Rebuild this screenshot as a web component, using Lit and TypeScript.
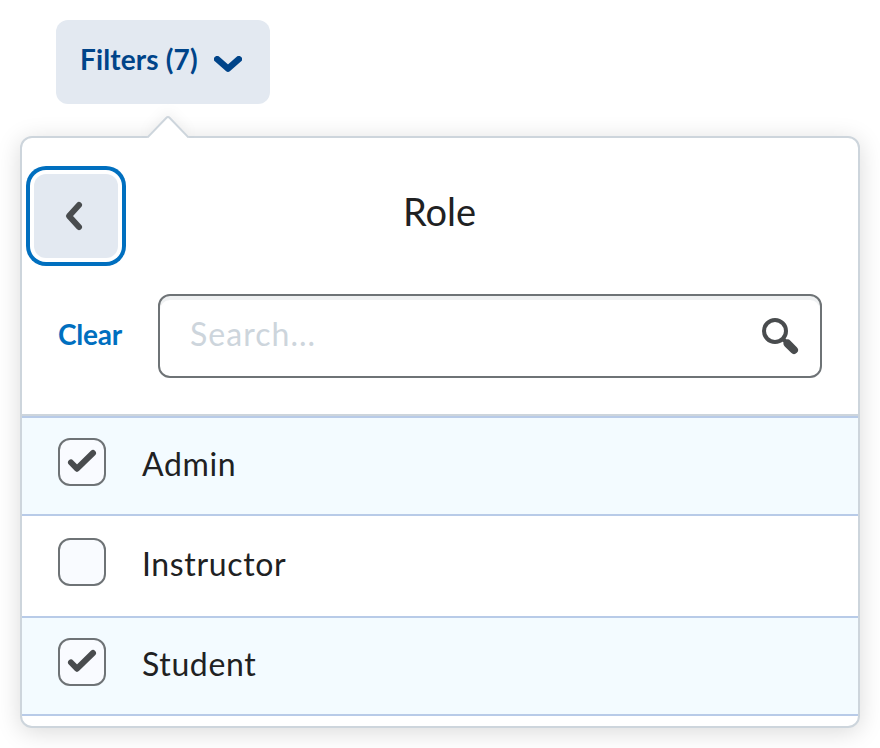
import { LitElement, html, css, svg, nothing } from "lit";
import { customElement, property, state } from "lit/decorators.js";
import { classMap } from "lit/directives/class-map.js";

interface Role {
  name: string;
  selected: boolean;
}

const checkIcon = svg`<path d="M13 24.5 L19 30.7 L35 15" fill="none" stroke="#494c4e" stroke-width="6" stroke-linecap="round" stroke-linejoin="round"/>`;

@customElement("role-item")
export class RoleItem extends LitElement {
  @property() label = "";
  @property({ type: Boolean, reflect: true }) selected = false;

  static styles = css`
    :host {
      display: block;
      color: #202122;
    }
    .row {
      box-sizing: border-box;
      display: flex;
      align-items: flex-start;
      gap: 36px;
      height: 100%;
      padding: var(--row-top, 22px) 36px 0;
    }
    .row.selected {
      background: #f3fbff;
    }
    .box {
      box-sizing: border-box;
      flex: none;
      width: 48px;
      height: 48px;
      border: 2px solid #6e7376;
      border-radius: 12px;
      background: #f9fbff;
    }
    .box svg {
      display: block;
      margin: -2px;
    }
    .label {
      font-size: 32px;
      line-height: 48px;
      letter-spacing: 0.64px;
      padding-top: 2px;
    }
  `;

  render() {
    return html`<div class=${classMap({ row: true, selected: this.selected })}>
      <div class="box" role="checkbox" aria-checked=${this.selected}>
        ${this.selected
          ? html`<svg width="48" height="48" viewBox="0 0 48 48">${checkIcon}</svg>`
          : nothing}
      </div>
      <div class="label">${this.label}</div>
    </div>`;
  }
}

@customElement("app-root")
export class AppRoot extends LitElement {
  @state() private roles: Role[] = [
    { name: "Admin", selected: true },
    { name: "Instructor", selected: false },
    { name: "Student", selected: true },
  ];

  static styles = css`
    :host {
      box-sizing: border-box;
      display: block;
      height: 748px;
      padding: 20px 20px 0;
      overflow: hidden;
      background: #fff;
      font-family: Lato, sans-serif;
      color: #202122;
    }
    button {
      font: inherit;
      border: 0;
      margin: 0;
    }
    .opener {
      box-sizing: border-box;
      display: flex;
      align-items: center;
      gap: 16px;
      width: 214px;
      height: 84px;
      margin-left: 36px;
      padding: 0 24px 6px;
      border-radius: 12px;
      background: #e3e9f1;
      color: #004489;
      font-size: 28px;
      font-weight: 700;
      line-height: 36px;
      letter-spacing: 0.13px;
      white-space: nowrap;
    }
    .opener span {
      width: 118px;
      text-align: left;
    }
    .opener svg {
      flex: none;
      margin-top: 12px;
    }
    .panel {
      position: relative;
      box-sizing: border-box;
      height: 592px;
      margin-top: 32px;
      border: 2px solid #cdd5dc;
      border-radius: 12px;
      background: #fff;
      box-shadow: 0 4px 24px rgba(0, 0, 0, 0.15);
    }
    .pointer {
      position: absolute;
      left: 106px;
      top: -34px;
      filter: drop-shadow(0 -4px 6px rgba(0, 0, 0, 0.05));
      clip-path: inset(0 0 0 0);
    }
    .title-bar {
      display: grid;
      grid-template-columns: 96px 1fr 96px;
      height: 156px;
    }
    .back {
      box-sizing: border-box;
      width: 84px;
      height: 84px;
      margin: 36px 0 0 12px;
      padding: 0;
      border-radius: 12px;
      background: #e3e9f1;
      box-shadow: 0 0 0 4px #fff, 0 0 0 8px #006fbf;
      outline: none;
    }
    .back svg {
      display: block;
    }
    .title {
      padding: 49px 1px 0 0;
      text-align: center;
      font-size: 38px;
      line-height: 48px;
    }
    .search-bar {
      box-sizing: border-box;
      display: flex;
      height: 122px;
      padding: 0 36px;
      border-bottom: 2px solid #cdd5dc;
    }
    .clear {
      width: 100px;
      padding: 0;
      background: none;
      color: #006fbf;
      font-size: 28px;
      font-weight: 700;
      line-height: 36px;
      letter-spacing: -0.2px;
      text-align: left;
      align-self: flex-start;
      margin-top: 22px;
    }
    .field {
      box-sizing: border-box;
      display: flex;
      justify-content: space-between;
      flex: 1;
      height: 84px;
      padding: 14px 18px 0 30px;
      border: 2px solid #6e7376;
      border-radius: 12px;
      box-shadow: inset 0 4px 0 rgba(177, 185, 190, 0.2);
      color: #cdd5dc;
      font-size: 32px;
      line-height: 48px;
      letter-spacing: 1.04px;
    }
    .list {
      display: grid;
      grid-template-rows: 98px 102px 98px;
      border-top: 2px solid #b8cbe8;
    }
    role-item {
      box-sizing: border-box;
      border-bottom: 2px solid #b8cbe8;
      --row-top: 20px;
    }
    role-item:nth-child(2) {
      --row-top: 22px;
    }
  `;

  render() {
    return html`
      <button class="opener">
        <span>Filters (7)</span>
        <svg width="28" height="18" viewBox="0 0 28 18">
          <path d="M3.2 3.2 L14 12.6 L24.8 3.2" fill="none" stroke="#004489" stroke-width="6.4" stroke-linecap="round" stroke-linejoin="round" />
        </svg>
      </button>
      <div class="panel">
        <svg class="pointer" width="80" height="34" viewBox="0 0 80 34">
          <path d="M18 35 L38.2 14 Q40 12.2 41.8 14 L62 35 Z" fill="#fff" />
          <path d="M19.3 33.6 L38.2 14 Q40 12.2 41.8 14 L60.7 33.6" fill="none" stroke="#cdd5dc" stroke-width="2" />
        </svg>
        <div class="title-bar">
          <button class="back" aria-label="Back">
            <svg width="84" height="84" viewBox="0 0 84 84">
              <path d="M45 31 L35 42 L45 53" fill="none" stroke="#494c4e" stroke-width="6" stroke-linecap="round" stroke-linejoin="round" />
            </svg>
          </button>
          <div class="title">Role</div>
        </div>
        <div class="search-bar">
          <button class="clear">Clear</button>
          <div class="field">
            <span>Search...</span>
            <svg width="44" height="52" viewBox="0 0 44 52">
              <circle cx="17" cy="21" r="11" fill="none" stroke="#494c4e" stroke-width="4" />
              <path d="M25 29 L29 33" stroke="#494c4e" stroke-width="4" />
              <path d="M29.6 33.6 L36 40" stroke="#494c4e" stroke-width="8" stroke-linecap="round" />
            </svg>
          </div>
        </div>
        <div class="list">
          ${this.roles.map(
            (role) => html`<role-item .label=${role.name} ?selected=${role.selected}></role-item>`
          )}
        </div>
      </div>
    `;
  }
}
